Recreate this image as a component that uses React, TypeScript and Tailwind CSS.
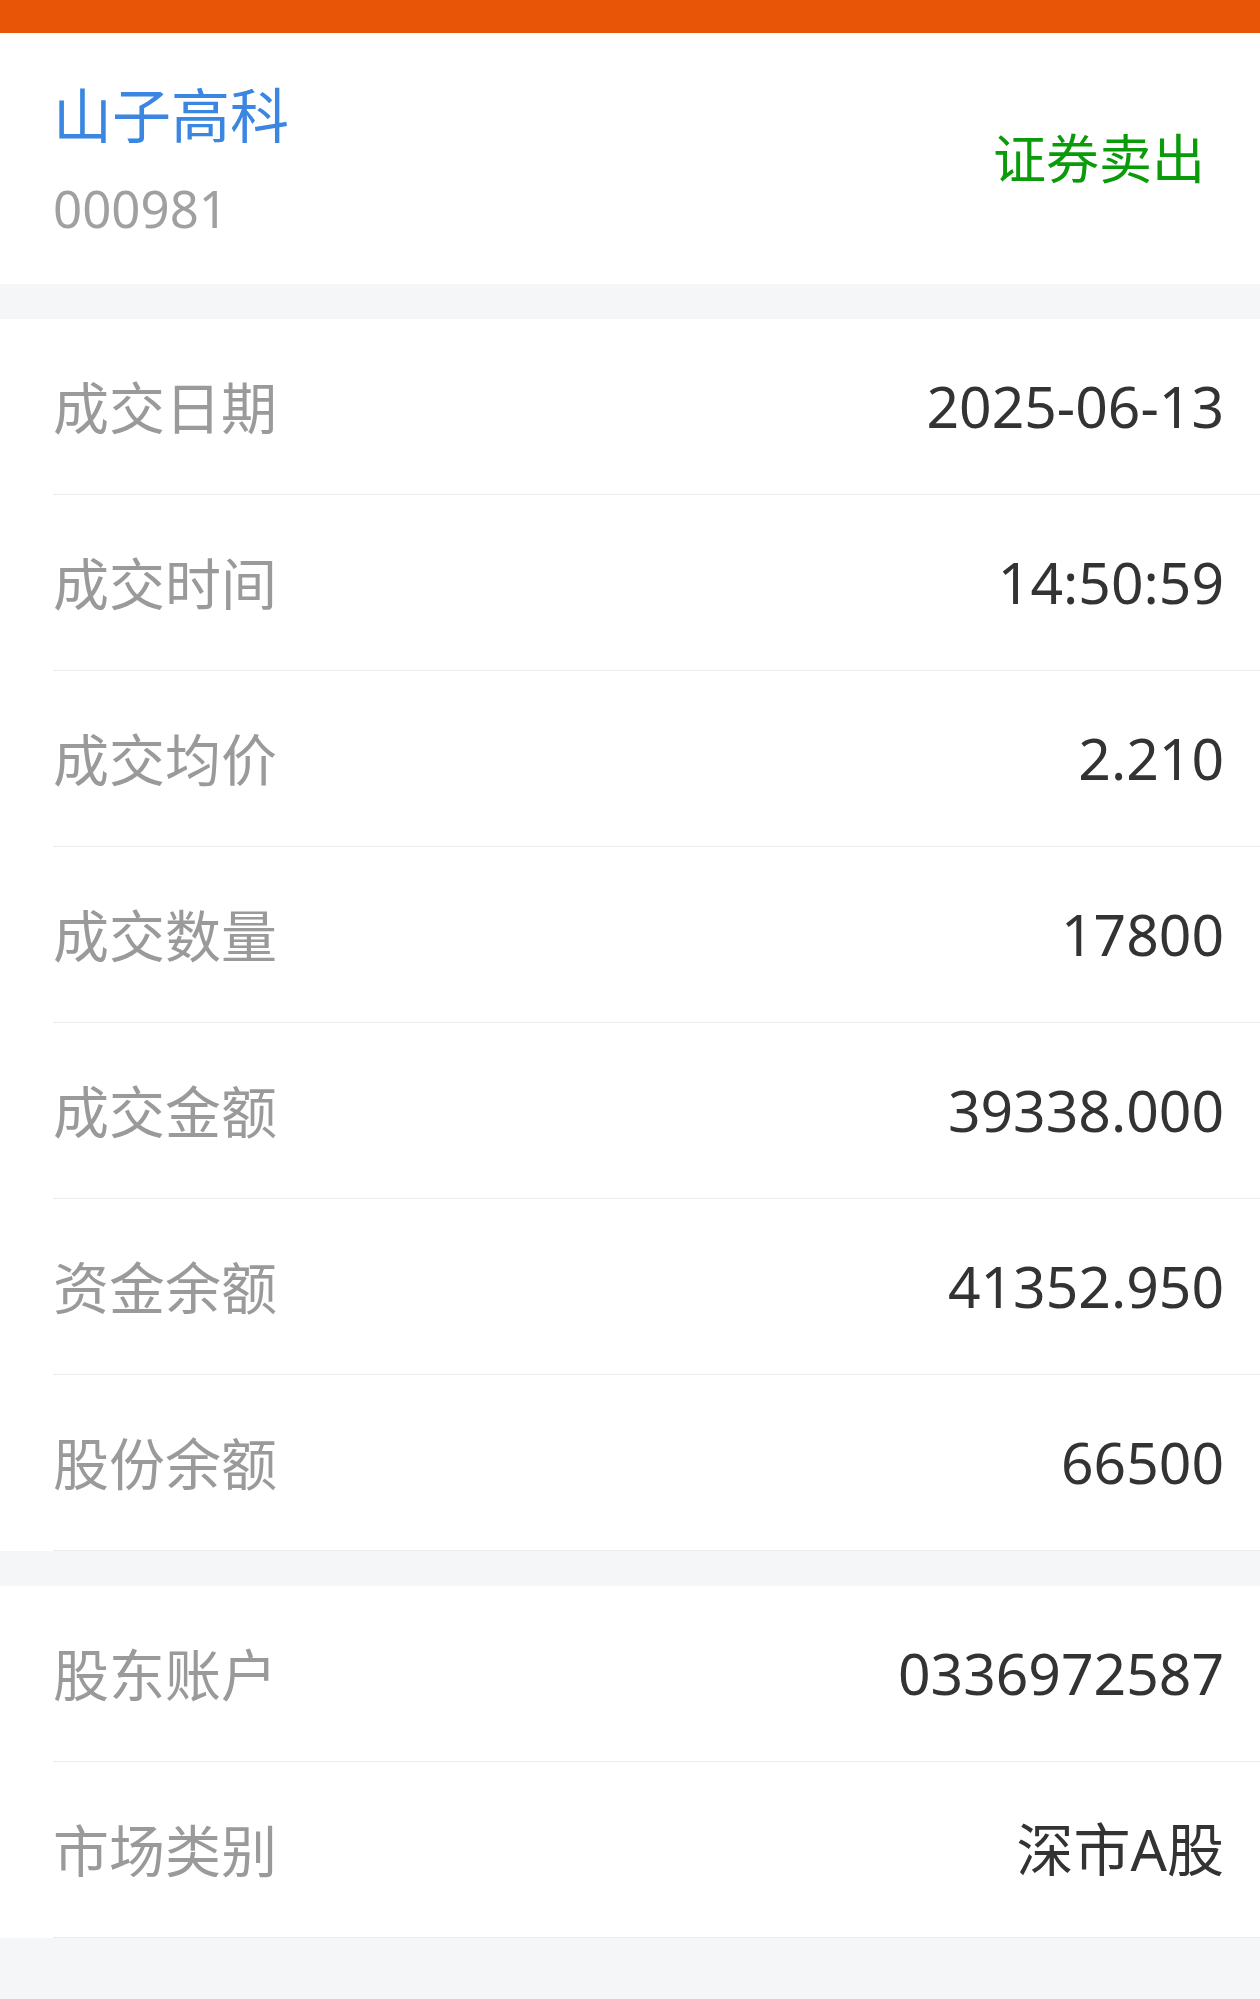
export default function App() {
  const trade = [
    { label: '成交日期', value: '2025-06-13' },
    { label: '成交时间', value: '14:50:59' },
    { label: '成交均价', value: '2.210' },
    { label: '成交数量', value: '17800' },
    { label: '成交金额', value: '39338.000' },
    { label: '资金余额', value: '41352.950' },
    { label: '股份余额', value: '66500' },
  ];
  const account = [
    { label: '股东账户', value: '0336972587' },
    { label: '市场类别', value: '深市A股' },
  ];

  return (
    <div className="min-h-screen bg-[#f5f6f8] font-['Noto_Sans','Noto_Sans_CJK_SC',sans-serif]">
      {/* 顶部栏 */}
      <div className="h-[33px] bg-[#e85506]" />

      {/* 股票信息 */}
      <div className="h-[251px] bg-white flex items-center justify-between pl-[53px] pr-[55px]">
        <div className="flex flex-col">
          <span className="text-[59px] leading-[70px] text-[#3a86e0]">山子高科</span>
          <span className="mt-[28px] text-[51px] leading-[60px] text-[#a0a0a0]">000981</span>
        </div>
        <span className="text-[53px] leading-[60px] text-[#0a9b0a]">证券卖出</span>
      </div>

      <div className="h-[35px]" />

      {/* 成交明细 */}
      <div className="bg-white">
        {trade.map((row) => (
          <Row key={row.label} label={row.label} value={row.value} />
        ))}
      </div>

      <div className="h-[35px]" />

      <div className="bg-white">
        {account.map((row) => (
          <Row key={row.label} label={row.label} value={row.value} />
        ))}
      </div>
    </div>
  );
}

function Row({ label, value }: { label: string; value: string }) {
  return (
    <div className="ml-[53px] h-[176px] border-b border-[#ececec] flex items-center justify-between pr-[36px]">
      <span className="text-[56px] text-[#9a9a9a]">{label}</span>
      <span className="text-[57px] text-[#333333]">{value}</span>
    </div>
  );
}
